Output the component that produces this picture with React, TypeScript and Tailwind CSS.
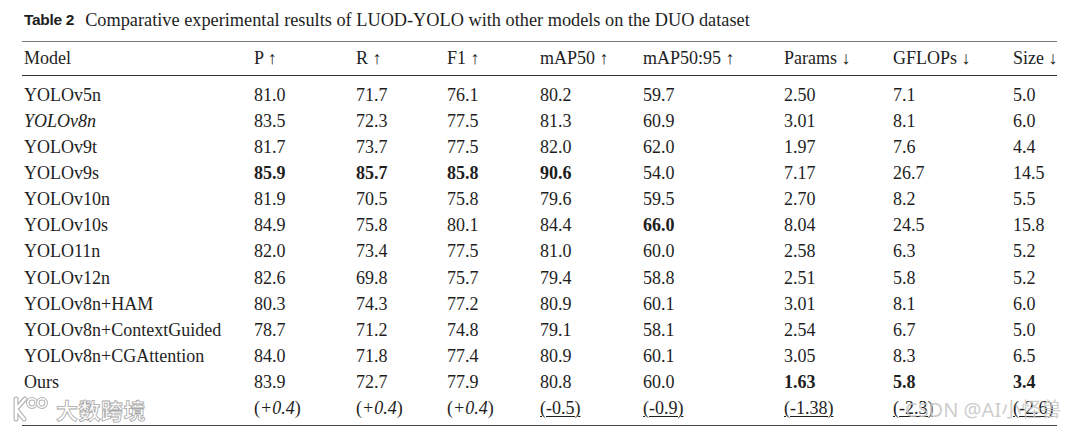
import React from "react";

type Cell = { v: string; b?: boolean; i?: boolean; u?: boolean; plus?: boolean };

const HEAD = ["Model", "P ↑", "R ↑", "F1 ↑", "mAP50 ↑", "mAP50:95 ↑", "Params ↓", "GFLOPs ↓", "Size ↓"];

const c = (v: string, extra: Partial<Cell> = {}): Cell => ({ v, ...extra });

const ROWS: Cell[][] = [
  [c("YOLOv5n"), c("81.0"), c("71.7"), c("76.1"), c("80.2"), c("59.7"), c("2.50"), c("7.1"), c("5.0")],
  [c("YOLOv8n", { i: true }), c("83.5"), c("72.3"), c("77.5"), c("81.3"), c("60.9"), c("3.01"), c("8.1"), c("6.0")],
  [c("YOLOv9t"), c("81.7"), c("73.7"), c("77.5"), c("82.0"), c("62.0"), c("1.97"), c("7.6"), c("4.4")],
  [c("YOLOv9s"), c("85.9", { b: true }), c("85.7", { b: true }), c("85.8", { b: true }), c("90.6", { b: true }), c("54.0"), c("7.17"), c("26.7"), c("14.5")],
  [c("YOLOv10n"), c("81.9"), c("70.5"), c("75.8"), c("79.6"), c("59.5"), c("2.70"), c("8.2"), c("5.5")],
  [c("YOLOv10s"), c("84.9"), c("75.8"), c("80.1"), c("84.4"), c("66.0", { b: true }), c("8.04"), c("24.5"), c("15.8")],
  [c("YOLO11n"), c("82.0"), c("73.4"), c("77.5"), c("81.0"), c("60.0"), c("2.58"), c("6.3"), c("5.2")],
  [c("YOLOv12n"), c("82.6"), c("69.8"), c("75.7"), c("79.4"), c("58.8"), c("2.51"), c("5.8"), c("5.2")],
  [c("YOLOv8n+HAM"), c("80.3"), c("74.3"), c("77.2"), c("80.9"), c("60.1"), c("3.01"), c("8.1"), c("6.0")],
  [c("YOLOv8n+ContextGuided"), c("78.7"), c("71.2"), c("74.8"), c("79.1"), c("58.1"), c("2.54"), c("6.7"), c("5.0")],
  [c("YOLOv8n+CGAttention"), c("84.0"), c("71.8"), c("77.4"), c("80.9"), c("60.1"), c("3.05"), c("8.3"), c("6.5")],
  [c("Ours"), c("83.9"), c("72.7"), c("77.9"), c("80.8"), c("60.0"), c("1.63", { b: true }), c("5.8", { b: true }), c("3.4", { b: true })],
  [c(""), c("+0.4", { plus: true }), c("+0.4", { plus: true }), c("+0.4", { plus: true }), c("(-0.5)", { u: true }), c("(-0.9)", { u: true }), c("(-1.38)", { u: true }), c("(-2.3)", { u: true }), c("(-2.6)", { u: true })],
];

const GRID = "grid grid-cols-[232px_102px_91px_93px_103px_141px_109px_120px_44px]";

function CellText({ cell }: { cell: Cell }) {
  if (cell.plus) {
    return (
      <span>
        (<span className="italic">{cell.v}</span>)
      </span>
    );
  }
  return (
    <span
      className={[
        cell.b ? "font-bold" : "",
        cell.i ? "italic" : "",
        cell.u ? "underline decoration-1 underline-offset-2" : "",
      ].join(" ")}
    >
      {cell.v}
    </span>
  );
}

export default function App() {
  return (
    <div className="relative w-[1080px] h-[435px] bg-white text-[#1e1e1e] font-['Liberation_Serif',serif] overflow-hidden">
      <div className="pl-[24px] pt-[8px] h-[41px] flex items-start text-[18.3px] leading-[24px] whitespace-nowrap">
        <span className="font-['Liberation_Sans',sans-serif] font-bold text-[15.5px] tracking-[-0.3px] mr-[11px]">Table 2</span>
        <span>Comparative experimental results of LUOD-YOLO with other models on the DUO dataset</span>
      </div>

      <div className="ml-[22px] w-[1035px]">
        <div className="border-t border-[#7a7a7a]" />
        <div className={`${GRID} h-[33px] items-center text-[18px] whitespace-nowrap`}>
          {HEAD.map((h, i) => (
            <div key={h} className={i === 0 ? "pl-[2px]" : ""}>{h}</div>
          ))}
        </div>
        <div className="border-t-[1.5px] border-[#2e2e2e]" />
        <div className="pt-[6px]">
          {ROWS.map((row, r) => (
            <div key={r} className={`${GRID} h-[26.08px] items-center text-[18px] whitespace-nowrap`}>
              {row.map((cell, i) => (
                <div key={i} className={i === 0 ? "pl-[2px]" : ""}>
                  <CellText cell={cell} />
                </div>
              ))}
            </div>
          ))}
        </div>
        <div className="mt-[4px] border-t-[1.5px] border-[#444]" />
      </div>

      {/* watermarks */}
      <div className="absolute left-[8px] top-[395px] flex items-center gap-[4px] select-none">
        <svg width="44" height="28" viewBox="0 0 44 28" fill="none" strokeLinecap="round">
          <path d="M8 4 V24 M8 14 L17 4 M8 14 L16 24" stroke="#b5b5b5" strokeWidth="5" />
          <path d="M8 4 V24 M8 14 L17 4 M8 14 L16 24" stroke="#fff" strokeWidth="2.6" />
          <circle cx="24" cy="8" r="4.2" stroke="#b5b5b5" strokeWidth="3.6" />
          <circle cx="24" cy="8" r="4.2" stroke="#fff" strokeWidth="1.6" />
          <circle cx="34" cy="8" r="4.2" stroke="#b5b5b5" strokeWidth="3.6" />
          <circle cx="34" cy="8" r="4.2" stroke="#fff" strokeWidth="1.6" />
        </svg>
        <span className="font-['Noto_Sans_CJK_SC',sans-serif] font-bold text-[22px] leading-[28px] tracking-[0.5px] text-white [-webkit-text-stroke:0.8px_#a8a8a8]">大数跨境</span>
      </div>
      <div className="absolute left-[905px] top-[397px] font-['Noto_Sans','Noto_Sans_CJK_SC',sans-serif] text-[20px] leading-[26px] text-[#c4c4c4]/85 whitespace-nowrap">
        CSDN @AI小怪兽
      </div>
    </div>
  );
}
